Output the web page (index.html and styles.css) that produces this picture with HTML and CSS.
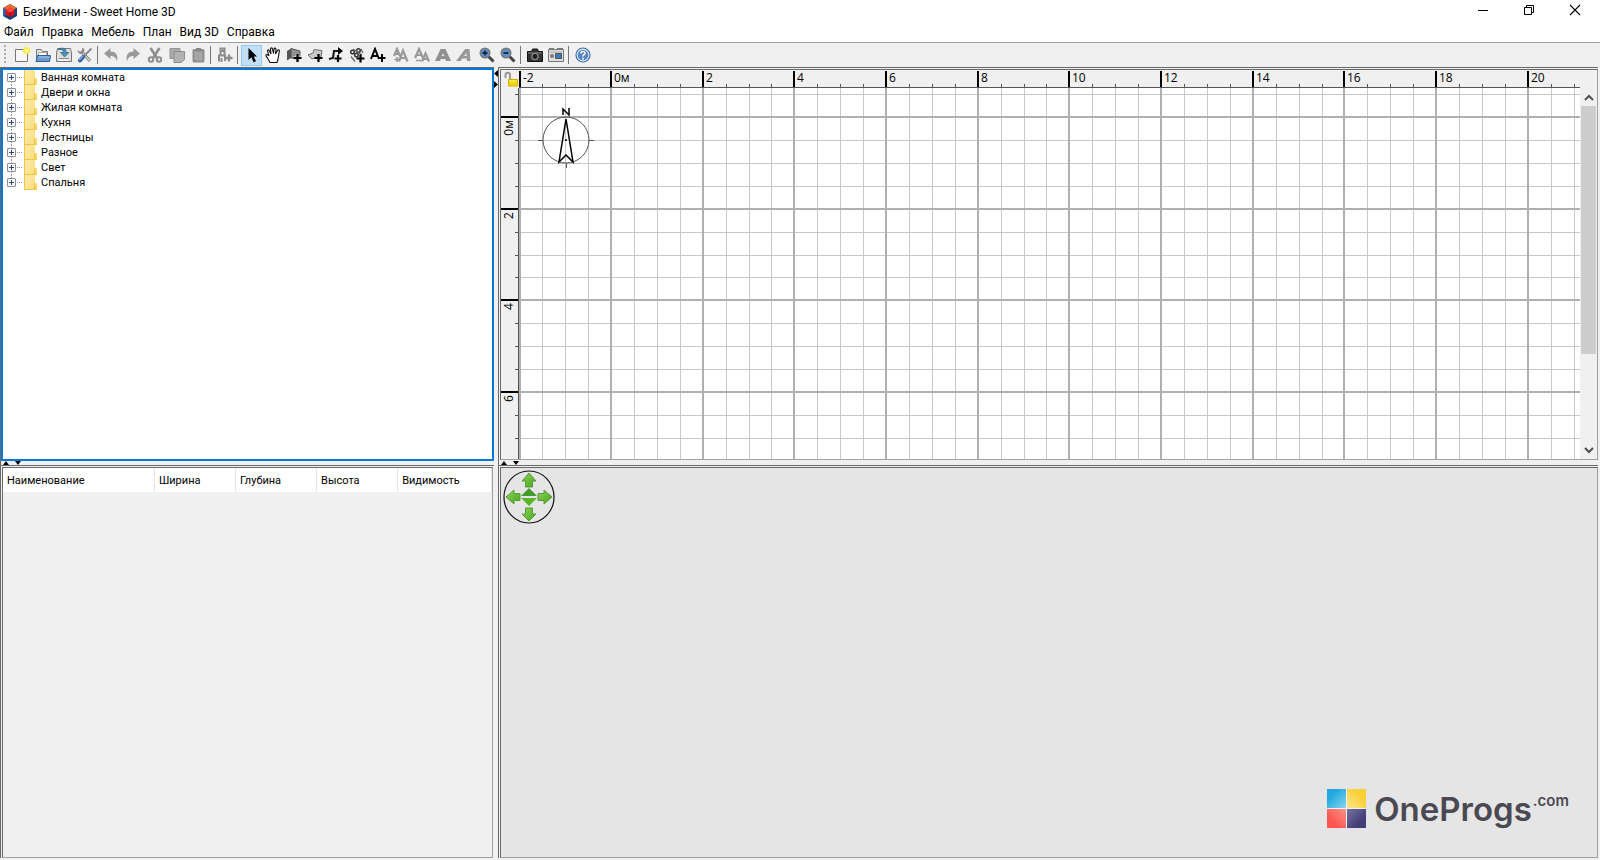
FILE: index.html
```html
<!DOCTYPE html>
<html lang="ru">
<head>
<meta charset="utf-8">
<title>БезИмени - Sweet Home 3D</title>
<link rel="stylesheet" href="styles.css">
</head>
<body>
<header class="titlebar">
  <svg class="app-icon" width="16" height="16" viewBox="0 0 16 16"><path d="M8 0l7 4v8l-7 4-7-4V4z" fill="#17407c"/><path d="M8 0l7 4-7 3-7-3z" fill="#e8702a"/><path d="M1 4l4 2v5l-4 1z" fill="#2b62a8"/><path d="M8 3.500l4.500 2.500v4.500L8 13l-4.500-2.500V6z" fill="#d8141c"/><path d="M8 3.500l4.500 2.500L8 8.500 3.500 6z" fill="#ff4a45"/><path d="M8 8.500v4.500" stroke="#8c0b16"/></svg>
  <h1 class="title">БезИмени - Sweet Home 3D</h1>
  <div class="window-buttons">
    <button class="window-button" aria-label="Свернуть"><svg width="12" height="12"><path d="M1 6.500h10" stroke="#000"/></svg></button>
    <button class="window-button" aria-label="Восстановить"><svg width="12" height="12" fill="none" stroke="#000"><path d="M1.500 3.500h7v7h-7zM3.500 3.500v-2h7v7h-2"/></svg></button>
    <button class="window-button" aria-label="Закрыть"><svg width="12" height="12"><path d="M1 1l10 10M11 1L1 11" stroke="#000" stroke-width="1.100"/></svg></button>
  </div>
</header>
<nav class="menubar">
  <button class="menu">Файл</button>
  <button class="menu">Правка</button>
  <button class="menu">Мебель</button>
  <button class="menu">План</button>
  <button class="menu">Вид 3D</button>
  <button class="menu">Справка</button>
</nav>
<div class="toolbar" role="toolbar">
  <span class="grip"></span>
  <div class="group">
    <button class="tool" aria-label="Новый"><svg viewBox="0 0 16 16"><path d="M1.500 2.500h12v12h-12z" fill="#f7f7f7" stroke="#777"/><circle cx="12.500" cy="3.500" r="3.500" fill="#f8ee4a"/><circle cx="12.500" cy="3.500" r="1.500" fill="#fffcb0"/></svg></button>
    <button class="tool" aria-label="Открыть"><svg viewBox="0 0 16 16"><path d="M1.500 13V2.500h5l1 2h5V13z" fill="#e6e6e6" stroke="#777"/><path d="M3.500 5.500h8v3h-8z" fill="#fff" stroke="#aaa"/><path d="M1 14.500l1.500-6h13l-1 6z" fill="#6c9bd2" stroke="#315f9b"/><path d="M3 10h11" stroke="#a9c8ec"/></svg></button>
    <button class="tool" aria-label="Сохранить"><svg viewBox="0 0 16 16"><path d="M.5 14.500V6l1-4.500h13l1 4.500v8.500z" fill="#dedede" stroke="#777"/><path d="M3 11.500h10" stroke="#888"/><path d="M3 13h10" stroke="#fff"/><path d="M2 2.500c4-3 9-1 8 3h3L8.500 10 4.500 5.500h3C8 3 5 2 2 2.500z" fill="#4e91b8" stroke="#28637f" stroke-width=".7"/></svg></button>
    <button class="tool" aria-label="Настройки"><svg viewBox="0 0 16 16"><path d="M4 4l9 10" stroke="#777" stroke-width="3"/><path d="M4 4l9 10" stroke="#d4d4d4" stroke-width="1.500"/><path d="M1 3l2 2 2-1V1c2 0 3 2 2 4L5 7C2 7 0 5 1 3z" fill="#8a8a8a"/><path d="M14.500 1.500L7 9" stroke="#888" stroke-width="1.800"/><path d="M6 10l-3 3.500" stroke="#3a609f" stroke-width="4" stroke-linecap="round"/><path d="M6 9l-4 4" stroke="#86aae0" stroke-width="1.500"/></svg></button>
  </div>
  <span class="separator"></span>
  <div class="group group-edit">
    <button class="tool" aria-label="Отменить"><svg viewBox="0 0 16 16"><path d="M1 6.500L7.500 1v3.500c5 0 8 3 6.500 10C13 10.500 11 9 7.500 9v3z" fill="#999"/></svg></button>
    <button class="tool" aria-label="Повторить"><svg viewBox="0 0 16 16"><path d="M15 6.500L8.500 1v3.500c-5 0-8 3-6.500 10C3 10.500 5 9 8.500 9v3z" fill="#999"/></svg></button>
    <button class="tool" aria-label="Вырезать"><svg viewBox="0 0 16 16" fill="none" stroke="#8e8e8e"><path d="M3.500 1l6.500 10M12.500 1L6 11" stroke-width="2.600"/><circle cx="4" cy="12.500" r="2.200" stroke-width="2"/><circle cx="12" cy="12.500" r="2.200" stroke-width="2"/></svg></button>
    <button class="tool" aria-label="Копировать"><svg viewBox="0 0 16 16"><path d="M1 1.500h10v10H1z" fill="#aaa" stroke="#959595"/><path d="M5 4.500h10.500v8l-3 3H5z" fill="#b2b2b2" stroke="#8d8d8d"/></svg></button>
    <button class="tool" aria-label="Вставить"><svg viewBox="0 0 16 16"><rect x="1.500" y="2" width="12" height="13.500" rx="1.500" fill="#8f8f8f"/><path d="M3.500 4.500h8v9h-8z" fill="#a6a6a6"/><path d="M5 1h5v3H5z" fill="#858585"/></svg></button>
  </div>
  <span class="separator"></span>
  <div class="group">
    <button class="tool" aria-label="Добавить мебель"><svg viewBox="0 0 16 16" fill="none" stroke="#8b8b8b"><path d="M3.500 8V1.500h4V8M3.500 4h4M2 14.500V8.500h6V14M4.500 11v4" stroke-width="2"/><path d="M12 7.500v7M8.500 11h7" stroke-width="2.400"/></svg></button>
  </div>
  <span class="separator"></span>
  <div class="group">
    <button class="tool tool-active" aria-label="Выбрать" aria-pressed="true"><svg viewBox="0 0 16 16"><path d="M4.500 1v12l3-2.700 2 5 2.500-1-2.200-4.800H13z" fill="#000"/></svg></button>
    <button class="tool" aria-label="Панорама"><svg viewBox="0 0 16 16"><path d="M5 15.500c-1-3-3.500-5-4-7 0-1.500 1.500-1.500 3 .5L2.500 4c0-1.500 1.500-1.500 2 0L6 7 5.500 2c0-1.500 2-1.500 2 0L8.500 6.500 9 2c.5-1.500 2-1 2 .5L10.500 7l2-3.500c1-1.300 2.200-.5 1.800.8C13.500 8 13.500 12 12 15.500z" fill="#fff" stroke="#111" stroke-width="1.100"/></svg></button>
    <button class="tool" aria-label="Создать стены"><svg viewBox="0 0 16 16"><path d="M1 4l4-2.500V11l-4 2.500z" fill="#555"/><path d="M5 1.500L14 4v8L5 11z" fill="#929292" stroke="#555"/><path d="M11.500 7v8M7.500 11h8" stroke="#ddd" stroke-width="3.500"/><path d="M11.500 7v8M7.500 11h8" stroke="#000" stroke-width="2.200"/></svg></button>
    <button class="tool" aria-label="Создать комнаты"><svg viewBox="0 0 16 16"><path d="M1 8l5-2 1-3.500 8 1-1 6-9 2.500z" fill="#c9c9c9" stroke="#6c6c6c"/><path d="M11.500 7v8M7.500 11h8" stroke="#000" stroke-width="2.200"/></svg></button>
    <button class="tool" aria-label="Создать полилинии"><svg viewBox="0 0 16 16"><path d="M1 12l4-1 1-7h6" fill="none" stroke="#111" stroke-width="2"/><path d="M10 0l5 4-5 4z"/><path d="M10 8v7M6.500 11.500h7" stroke="#000" stroke-width="2.200"/></svg></button>
    <button class="tool" aria-label="Создать размеры"><svg viewBox="0 0 16 16" fill="none" stroke="#333"><circle cx="3.500" cy="5" r="1.800" stroke-width="1.500"/><circle cx="7.500" cy="8" r="1.800" stroke-width="1.500"/><circle cx="9.500" cy="3.500" r="1.800" stroke-width="1.500"/><path d="M2 9.500l4 5M4 2l9 6M12 2l2 4" stroke="#666" stroke-width="1.300"/><path d="M11.500 7.500v8M7.500 11.500h8" stroke="#000" stroke-width="2.200"/></svg></button>
    <button class="tool" aria-label="Добавить текст"><svg viewBox="0 0 16 16" fill="none" stroke="#000"><path d="M1 12L5 2l4 10M3 9h5M12 7v8M8.500 11h7" stroke-width="2"/></svg></button>
  </div>
  <div class="group group-spaced">
    <button class="tool" aria-label="Увеличить текст"><svg viewBox="0 0 16 16" fill="none" stroke="#999"><path d="M1 9l3-7 3 7M2.500 7h4M6 14.500l4-11 4.500 11M8 11h5" stroke-width="2.200"/><path d="M4 10v5M1.500 12.500h5" stroke-width="1.500"/></svg></button>
    <button class="tool" aria-label="Уменьшить текст"><svg viewBox="0 0 16 16" fill="none" stroke="#999"><path d="M1 11l4-9 4 9M3 8h5M8 14.500l3.500-8 3.500 8M9.500 12h4" stroke-width="2.200"/><path d="M2 13.500h5" stroke-width="1.500"/></svg></button>
    <button class="tool" aria-label="Полужирный"><svg viewBox="0 0 16 16"><path d="M0 14L5.500 2h5L16 14h-5l-.8-2H5.800L5 14zM6.800 9h2.400L8 6z" fill="#919191" fill-rule="evenodd"/></svg></button>
    <button class="tool" aria-label="Курсив"><svg viewBox="0 0 16 16"><path d="M0 14L9 2h4.500l1 12h-3.500l-.3-2.500H6.500L4.500 14zM8 9h2.500V6z" fill="#999" fill-rule="evenodd"/></svg></button>
  </div>
  <div class="group group-spaced">
    <button class="tool" aria-label="Увеличить"><svg viewBox="0 0 16 16"><path d="M9.500 9.500l5 5" stroke="#444" stroke-width="3"/><circle cx="6" cy="6" r="4.800" fill="#648fc1" stroke="#777" stroke-width="1.400"/><path d="M6 3.500v5M3.500 6h5" stroke="#10284d" stroke-width="1.800"/></svg></button>
    <button class="tool" aria-label="Уменьшить"><svg viewBox="0 0 16 16"><path d="M9.500 9.500l5 5" stroke="#444" stroke-width="3"/><circle cx="6" cy="6" r="4.800" fill="#648fc1" stroke="#777" stroke-width="1.400"/><path d="M3.500 6h5" stroke="#10284d" stroke-width="1.800"/></svg></button>
  </div>
  <span class="separator"></span>
  <div class="group">
    <button class="tool" aria-label="Создать фото"><svg viewBox="0 0 16 16"><path d="M.5 4.500h4l1-2.500h5l1 2.500h4v10H.5z" fill="#333" stroke="#111"/><path d="M1 6h14" stroke="#888"/><circle cx="8" cy="9.500" r="3.800" fill="#888"/><circle cx="8" cy="9.500" r="2.400" fill="#1c1c1c"/></svg></button>
    <button class="tool" aria-label="Создать видео"><svg viewBox="0 0 16 16"><path d="M.5 2.500h15v12H.5z" fill="#ddd" stroke="#777"/><path d="M1 2h5M9 2h6" stroke="#777" stroke-width="2"/><path d="M2 5h12" stroke="#aaa"/><circle cx="4" cy="9" r="2" fill="#777"/><path d="M7.500 6.500h6v5h-6z" fill="#3979c0" stroke="#555"/></svg></button>
  </div>
  <span class="separator"></span>
  <div class="group">
    <button class="tool" aria-label="Справка"><svg viewBox="0 0 16 16"><circle cx="8" cy="8" r="7" fill="#e9f0fb" stroke="#3c6bb3" stroke-width="1.200"/><circle cx="8" cy="8" r="5.300" fill="#5585c9"/><path d="M6 6.500c0-3 4.500-2.500 4 0C9.800 7.800 8 7.800 8 9.500M8 10.800v1.700" fill="none" stroke="#fff" stroke-width="1.600"/></svg></button>
  </div>
</div>

<main class="workspace">
  <section class="pane-tree">
    <ul class="tree">
      <li class="node"><button class="expander" aria-label="Развернуть"></button><span class="folder"></span>Ванная комната</li>
      <li class="node"><button class="expander" aria-label="Развернуть"></button><span class="folder"></span>Двери и окна</li>
      <li class="node"><button class="expander" aria-label="Развернуть"></button><span class="folder"></span>Жилая комната</li>
      <li class="node"><button class="expander" aria-label="Развернуть"></button><span class="folder"></span>Кухня</li>
      <li class="node"><button class="expander" aria-label="Развернуть"></button><span class="folder"></span>Лестницы</li>
      <li class="node"><button class="expander" aria-label="Развернуть"></button><span class="folder"></span>Разное</li>
      <li class="node"><button class="expander" aria-label="Развернуть"></button><span class="folder"></span>Свет</li>
      <li class="node"><button class="expander" aria-label="Развернуть"></button><span class="folder"></span>Спальня</li>
    </ul>
  </section>
  <div class="splitter-v"><svg width="4" height="20"><path d="M4 2v7L0 5.500zM0 13v7l4-3.500z"/></svg></div>
  <section class="pane pane-plan">
    <div class="inner plan-grid">
      <button class="lock" aria-label="Заблокировать план"><svg width="16" height="16" viewBox="0 0 16 16"><path d="M3.500 7V4c0-3 4.500-3 4.500 0v5" fill="none" stroke="#999" stroke-width="2"/><path d="M6.500 8.500h9v6.500h-9z" fill="#f4d80c" stroke="#d0ae00"/><path d="M7 10h8" stroke="#fff27a"/></svg></button>
      <svg class="ruler-h" id="ruler-h"></svg>
      <span class="corner"></span>
      <svg class="ruler-v" id="ruler-v"></svg>
      <svg class="plan" id="plan">
        <g id="grid"></g>
        <g class="compass">
          <circle cx="47" cy="52" r="23"/>
          <path d="M19 52.500h5M70 52.500h5M47.500 75v5"/>
          <path class="needle" d="M47 31l-7 43 7-7 7 7z"/>
          <path class="needle" d="M44 27v-6l6 6v-7"/>
          <circle class="hub" cx="47" cy="52" r="1"/>
        </g>
      </svg>
      <div class="scrollbar">
        <button class="scroll-button" aria-label="Вверх"><svg width="10" height="8"><path d="M1 7l4-4 4 4" fill="none" stroke="#505050" stroke-width="2"/></svg></button>
        <div class="scroll-track"><div class="scroll-thumb"></div></div>
        <button class="scroll-button" aria-label="Вниз"><svg width="10" height="8"><path d="M1 2l4 4 4-4" fill="none" stroke="#505050" stroke-width="2"/></svg></button>
      </div>
    </div>
  </section>
  <div class="splitter-h splitter-left"><svg width="20" height="4"><path d="M0 4h6L3 0zM12 0h6l-3 4z"/></svg></div>
  <div class="splitter-h splitter-right"><svg width="20" height="4"><path d="M0 4h6L3 0zM12 0h6l-3 4z"/></svg></div>
  <section class="pane pane-table">
    <div class="inner">
      <table class="furniture">
        <colgroup><col class="col-name"><col class="col-size"><col class="col-size"><col class="col-size"><col></colgroup>
        <thead><tr><th>Наименование</th><th>Ширина</th><th>Глубина</th><th>Высота</th><th>Видимость</th></tr></thead>
      </table>
    </div>
  </section>
  <section class="pane pane-view">
    <div class="inner view">
      <svg class="navigator" width="52" height="54" viewBox="0 0 52 54">
        <defs><linearGradient id="green" x1="0" y1="0" x2="1" y2="1"><stop offset="0" stop-color="#91d45a"/><stop offset="1" stop-color="#45a51c"/></linearGradient></defs>
        <ellipse cx="26" cy="27" rx="25" ry="26" fill="none" stroke="#111" stroke-width="1.200"/>
        <g fill="url(#green)" stroke="#5a9a3a">
          <path d="M26 3l7 8h-3.500v6h-7v-6H19z"/>
          <path d="M26 51l7-7h-3.500v-6h-7v6H19z"/>
          <path d="M3 27l8-7v3.500h6v7h-6V34z"/>
          <path d="M49 27l-8-7v3.500h-6v7h6V34z"/>
        </g>
        <path d="M26 18l8 8H18z" fill="#459b2c"/><path d="M26 36l8-8H18z" fill="#56b52b"/>
      </svg>
      <div class="brand">
        <svg width="40" height="40" viewBox="0 0 40 40">
          <defs>
            <linearGradient id="b" x1="0" y1="0" x2="1" y2="1"><stop offset=".3" stop-color="#22aade"/><stop offset="1" stop-color="#8bd5f1"/></linearGradient>
            <linearGradient id="y" x1="1" y1="0" x2="0" y2="1"><stop offset=".3" stop-color="#f9cf35"/><stop offset="1" stop-color="#fbe58d"/></linearGradient>
            <linearGradient id="r" x1="0" y1="1" x2="1" y2="0"><stop offset=".3" stop-color="#fb5650"/><stop offset="1" stop-color="#fc938a"/></linearGradient>
            <linearGradient id="p" x1="1" y1="1" x2="0" y2="0"><stop offset=".3" stop-color="#433f77"/><stop offset="1" stop-color="#77739d"/></linearGradient>
          </defs>
          <path d="M0 0h39v39H0z" fill="#f2f2f2"/>
          <path d="M0 0h19v19H0z" fill="url(#b)"/><path d="M20 0h19v19H20z" fill="url(#y)"/><path d="M0 20h19v19H0z" fill="url(#r)"/><path d="M20 20h19v19H20z" fill="url(#p)"/>
        </svg>
        <span class="brand-name">OneProgs</span><span class="brand-domain">.com</span>
      </div>
    </div>
  </section>
</main>
<script src="plan.js"></script>
</body>
</html>
```
FILE: styles.css
```css
* { box-sizing: border-box; }
body {
  margin: 0;
  height: 100vh;
  display: flex;
  flex-direction: column;
  background: #f0f0f0;
  color: #000;
  font: 11px/15px Roboto, "Liberation Sans", sans-serif;
  overflow: hidden;
}
button { border: 0; padding: 0; margin: 0; background: none; font: inherit; color: inherit; }
svg { display: block; }

.titlebar { display: flex; align-items: center; height: 24px; padding-left: 2px; background: #fff; }
.title { margin: 0 auto 0 5px; font: 12px/16px Roboto, sans-serif; }
.window-buttons { display: flex; align-self: flex-start; padding-right: 2px; }
.window-button { width: 46px; height: 20px; display: grid; place-items: center; }

.menubar { display: flex; align-items: flex-start; gap: 8px; height: 18px; padding-left: 4px; background: #fff; font: 12px/17px Roboto, sans-serif; }

.toolbar { display: flex; align-items: center; height: 25px; border-top: 1px solid #a0a0a0; }
.grip { width: 2px; height: 20px; margin: 0 5px 0 4px; background: repeating-linear-gradient(#aaa 0 2px, transparent 2px 4px); }
.group { display: flex; }
.group-edit { gap: 1px; margin: 0 -1px; }
.group-spaced { margin-left: 2px; }
.tool { width: 21px; height: 21px; display: grid; place-items: center; }
.tool svg { width: 16px; height: 16px; }
.tool-active { background: #c2dff5; border: 1px solid #90c8f6; }
.separator { width: 1px; height: 18px; margin: 0 3px 0 2px; background: #777; }

.workspace {
  flex: 1;
  min-height: 0;
  display: grid;
  grid-template-columns: 494fr 4px 1100fr;
  grid-template-rows: 394fr 4px 393fr;
  padding: 0 2px 2px 0;
}
.pane-tree { border-top: 1px solid #696969; border-left: 1px solid #696969; min-height: 0; }
.tree { margin: 0; height: 100%; padding: 0 0 0 4px; list-style: none; background: #fff; border: 2px solid #0078d7; }
.node {
  display: flex;
  align-items: center;
  height: 15px;
  white-space: nowrap;
  background:
    repeating-linear-gradient(90deg, #999 0 1px, transparent 1px 2px) 10px 7px / 6px 1px no-repeat,
    repeating-linear-gradient(#999 0 1px, transparent 1px 2px) 4px 0 / 1px 100% no-repeat;
}
.node:first-child { background-position: 10px 7px, 4px 8px; }
.node:last-child { background-size: 6px 1px, 1px 7px; }
.expander {
  width: 9px;
  height: 9px;
  border: 1px solid #919191;
  border-radius: 1px;
  background: linear-gradient(#26479b, #26479b) center / 5px 1px no-repeat, linear-gradient(#26479b, #26479b) center / 1px 5px no-repeat, #f8f8f8;
}
.folder {
  width: 13px;
  height: 15px;
  margin: 0 4px 0 8px;
  flex: none;
  background:
    linear-gradient(#edc748, #edc748) left / 1px 100% no-repeat,
    linear-gradient(#edc748, #edc748) bottom left / 11px 1px no-repeat,
    linear-gradient(#edc748, #edc748) 10px 100% / 1px 7px no-repeat,
    linear-gradient(#fbe083, #f3cd55) bottom right / 2px 7px no-repeat,
    linear-gradient(110deg, #ffebaa, #fadd7c) left / 11px 100% no-repeat;
}

.splitter-v { grid-row: 1 / 4; grid-column: 2; padding-top: 1px; }
.splitter-h { padding-left: 2px; }
.splitter-left { grid-area: 2 / 1; border-left: 1px solid #696969; }
.splitter-right { grid-area: 2 / 3; border-left: 1px solid #696969; }

.pane { min-width: 0; min-height: 0; padding: 1px 0 0 1px; border-top: 1px solid #696969; border-left: 1px solid #696969; }
.inner { height: 100%; border: 1px solid; border-color: #696969 #a0a0a0 #a0a0a0 #696969; }
.pane-plan { grid-area: 1 / 3; padding-bottom: 1px; }
.pane-table { grid-area: 3 / 1; padding-right: 1px; }
.pane-view { grid-area: 3 / 3; }

.plan-grid { display: grid; grid-template-columns: 18px minmax(0, 1fr) 17px; grid-template-rows: 18px minmax(0, 1fr); }
.plan-grid svg { overflow: hidden; }
.lock { display: grid; place-items: center; }
.ruler-h, .ruler-v, .plan { width: 100%; height: 100%; }
.ruler-h text, .ruler-v text { font: 12px "Open Sans", sans-serif; }
.plan { background: #fff; }
.minor { stroke: #c8c8c8; }
.major { stroke: #b0b0b0; stroke-width: 2; }
.tick { stroke: #555; }
.tick-major { stroke: #000; stroke-width: 2; }
.compass { fill: none; stroke: #555; }
.compass .needle { stroke: #000; stroke-width: 1.500; }
.compass .hub { fill: #000; stroke: none; }

.scrollbar { display: flex; flex-direction: column; padding: 0 1px; }
.scroll-button { height: 18px; display: grid; place-items: center; }
.scroll-track { flex: 1; }
.scroll-thumb { height: 74%; background: #cdcdcd; }

.furniture { width: 100%; border-collapse: collapse; table-layout: fixed; }
.col-name { width: 31%; }
.col-size { width: 16.600%; }
.furniture th { height: 24px; padding: 0 4px; text-align: left; font-weight: normal; background: #fff; border-right: 1px solid #e5e5e5; }

.view { position: relative; background: #e5e5e5; }
.navigator { position: absolute; left: 2px; top: 2px; }
.brand { position: absolute; right: 28px; bottom: 28px; display: flex; align-items: center; color: #4a4952; font-family: Inter, sans-serif; font-weight: 600; }
.brand-name { margin-left: 7px; font-size: 33px; line-height: 40px; }
.brand-domain { align-self: flex-start; margin-left: 1px; font-size: 15px; line-height: 24px; }
```
FILE: plan.js
```
const NS = 'http://www.w3.org/2000/svg';
const STEP = 22.92;
const ORIGIN = { x: 91, y: 28 };

function add(parent, name, attrs, text) {
  const el = document.createElementNS(NS, name);
  for (const key in attrs) el.setAttribute(key, attrs[key]);
  if (text) el.textContent = text;
  parent.appendChild(el);
}

function line(parent, cls, x1, y1, x2, y2) {
  add(parent, 'line', { class: cls, x1, y1, x2, y2 });
}

function draw() {
  const plan = document.getElementById('plan');
  const grid = document.getElementById('grid');
  const rulerH = document.getElementById('ruler-h');
  const rulerV = document.getElementById('ruler-v');
  const width = plan.clientWidth;
  const height = plan.clientHeight;
  [grid, rulerH, rulerV].forEach(el => el.replaceChildren());

  for (const isMajor of [false, true]) {
    const cls = isMajor ? 'major' : 'minor';
    const tick = isMajor ? 'tick tick-major' : 'tick';
    const offset = isMajor ? 1 : 1.5;
    for (let i = -4; ORIGIN.x + i * STEP < width; i++) {
      if ((i % 4 === 0) !== isMajor) continue;
      const x = Math.max(0, Math.round(ORIGIN.x + i * STEP)) + offset;
      line(grid, cls, x, 0, x, height);
      line(rulerH, tick, x, isMajor ? 1 : 14, x, 18);
      if (isMajor) add(rulerH, 'text', { x: x + 3, y: 12 }, i === 0 ? '0м' : String(i / 2));
    }
    for (let i = -1; ORIGIN.y + i * STEP < height; i++) {
      if ((i % 4 === 0) !== isMajor) continue;
      const y = Math.round(ORIGIN.y + i * STEP) + offset;
      line(grid, cls, 0, y, width, y);
      line(rulerV, tick, isMajor ? 0 : 14, y, 18, y);
      if (isMajor) add(rulerV, 'text', { transform: `translate(12 ${y + 3}) rotate(-90)`, 'text-anchor': 'end' }, i === 0 ? '0м' : String(i / 2));
    }
  }
  line(rulerH, 'tick', 0, 17.5, width, 17.5);
  line(rulerV, 'tick', 17.5, 0, 17.5, height);
}

draw();
window.addEventListener('resize', draw);
```
